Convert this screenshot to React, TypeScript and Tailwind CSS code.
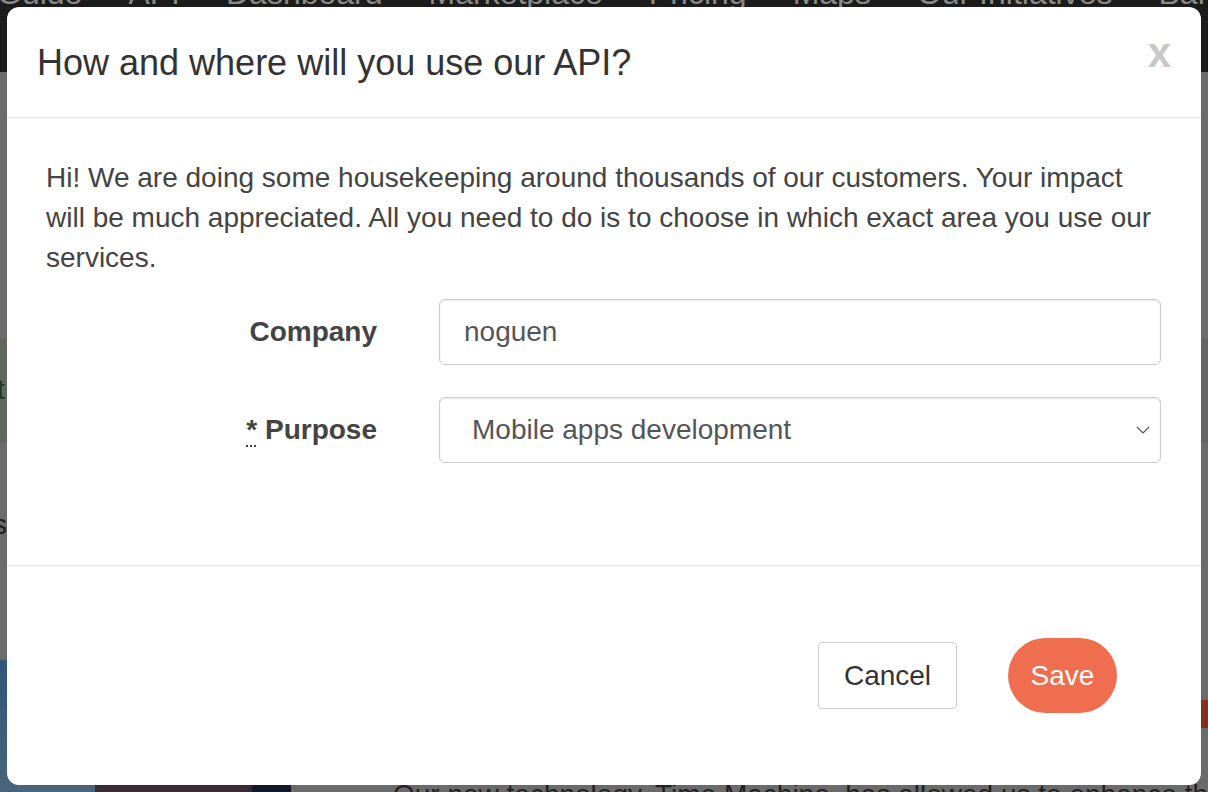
import { useState } from "react";

const navLinks = ["Guide", "API", "Dashboard", "Marketplace", "Pricing", "Maps", "Our Initiatives", "Bank"];

const ChevronDown = () => (
  <svg width="14" height="8" viewBox="0 0 14 8" fill="none" className="pointer-events-none">
    <path d="M1 1 7 7 13 1" stroke="#555" strokeWidth="1.2" />
  </svg>
);

const PageBehind = () => (
  <div className="flex h-full flex-col">
    <div className="h-[72px] shrink-0 overflow-hidden bg-[#1c1c1c]">
      <div className="-ml-[3px] -mt-[25px] flex gap-[46px] text-[32px] leading-[36px] text-[#8a8a8a]">
        {navLinks.map((l) => (
          <span key={l} className="whitespace-nowrap">
            {l}
          </span>
        ))}
      </div>
    </div>
    <div className="flex flex-1 flex-col bg-[#6b6b6b]">
      <div className="h-[266px] shrink-0" />
      <div className="flex h-[104px] shrink-0 items-center bg-[#5f675e] text-[28px] text-[#1f3a1f]">
        <span className="-ml-[3px]">t</span>
      </div>
      <div className="h-[166px] shrink-0 pt-[68px] text-[28px] leading-[30px] text-[#222]">
        <span className="-ml-[7px]">s</span>
      </div>
      <div className="flex flex-1">
        <div className="mt-[52px] w-[96px] bg-gradient-to-b from-[#2f5678] to-[#4a647c]" />
        <div className="mt-[120px] w-[158px] bg-[#3a2a36]" />
        <div className="mt-[120px] w-[39px] bg-[#0f1a2a]" />
        <div className="flex flex-1 flex-col">
          <div className="flex justify-end">
            <div className="mt-[92px] h-[28px] w-[8px] bg-[#8a2c1c]" />
          </div>
          <div className="mt-auto -mb-[18px] pl-[102px] text-[28px] leading-[30px] whitespace-nowrap text-[#222]">
            Our new technology, Time Machine, has allowed us to enhance th
          </div>
        </div>
      </div>
    </div>
  </div>
);

export default function App() {
  const [company, setCompany] = useState("noguen");
  const [purpose, setPurpose] = useState("mobile");

  return (
    <div
      className="relative h-[792px] w-[1208px] overflow-hidden"
      style={{ fontFamily: '"Liberation Sans", Arial, sans-serif' }}
    >
      <PageBehind />

      <div className="absolute inset-0 p-[7px]">
        <div className="flex h-full flex-col rounded-[12px] bg-white">
          {/* header */}
          <div className="flex h-[111px] shrink-0 items-start justify-between border-b border-[#e5e5e5] pl-[30px] pr-[30px]">
            <h4 className="mt-[36px] text-[36px] leading-[40px] text-[#333]">How and where will you use our API?</h4>
            <button type="button" className="mt-[25px] text-[42px] font-bold leading-[42px] text-[#c8c8c8]">
              x
            </button>
          </div>

          {/* body */}
          <div className="h-[448px] shrink-0 border-b border-[#e5e5e5] px-[39px] pt-[40px]">
            <p className="text-[28px] leading-[40px] text-[#444]">
              Hi! We are doing some housekeeping around thousands of our customers. Your impact will be much
              appreciated. All you need to do is to choose in which exact area you use our services.
            </p>

            <form className="mt-[21px] flex flex-col gap-[32px]">
              <div className="flex items-center">
                <label className="w-[331px] text-right text-[28px] font-bold text-[#444]">Company</label>
                <input
                  type="text"
                  value={company}
                  onChange={(e) => setCompany(e.target.value)}
                  className="ml-[62px] h-[66px] w-[722px] rounded-[6px] border border-[#ccc] px-[24px] text-[28px] text-[#555] shadow-[inset_0_1px_2px_rgba(0,0,0,0.1)] outline-none"
                />
              </div>
              <div className="flex items-center">
                <label className="w-[331px] text-right text-[28px] font-bold text-[#444]">
                  <abbr title="required" className="underline decoration-dotted decoration-2 underline-offset-[6px]">
                    *
                  </abbr>{" "}
                  Purpose
                </label>
                <div className="relative ml-[62px] w-[722px]">
                  <select
                    value={purpose}
                    onChange={(e) => setPurpose(e.target.value)}
                    className="h-[66px] w-full appearance-none rounded-[6px] border border-[#ccc] bg-white pl-[32px] text-[28px] text-[#555] shadow-[inset_0_1px_2px_rgba(0,0,0,0.1)] outline-none"
                  >
                    <option value="mobile">Mobile apps development</option>
                    <option value="web">Web development</option>
                    <option value="other">Other</option>
                  </select>
                  <span className="absolute right-[11px] top-[29px]">
                    <ChevronDown />
                  </span>
                </div>
              </div>
            </form>
          </div>

          {/* footer */}
          <div className="flex flex-1 items-center justify-end gap-[51px] pr-[84px]">
            <button
              type="button"
              className="h-[67px] w-[139px] rounded-[4px] border border-[#ccc] bg-white text-[28px] text-[#333]"
            >
              Cancel
            </button>
            <button type="button" className="h-[75px] w-[109px] rounded-full bg-[#ee6e4f] text-[28px] text-white">
              Save
            </button>
          </div>
        </div>
      </div>
    </div>
  );
}
